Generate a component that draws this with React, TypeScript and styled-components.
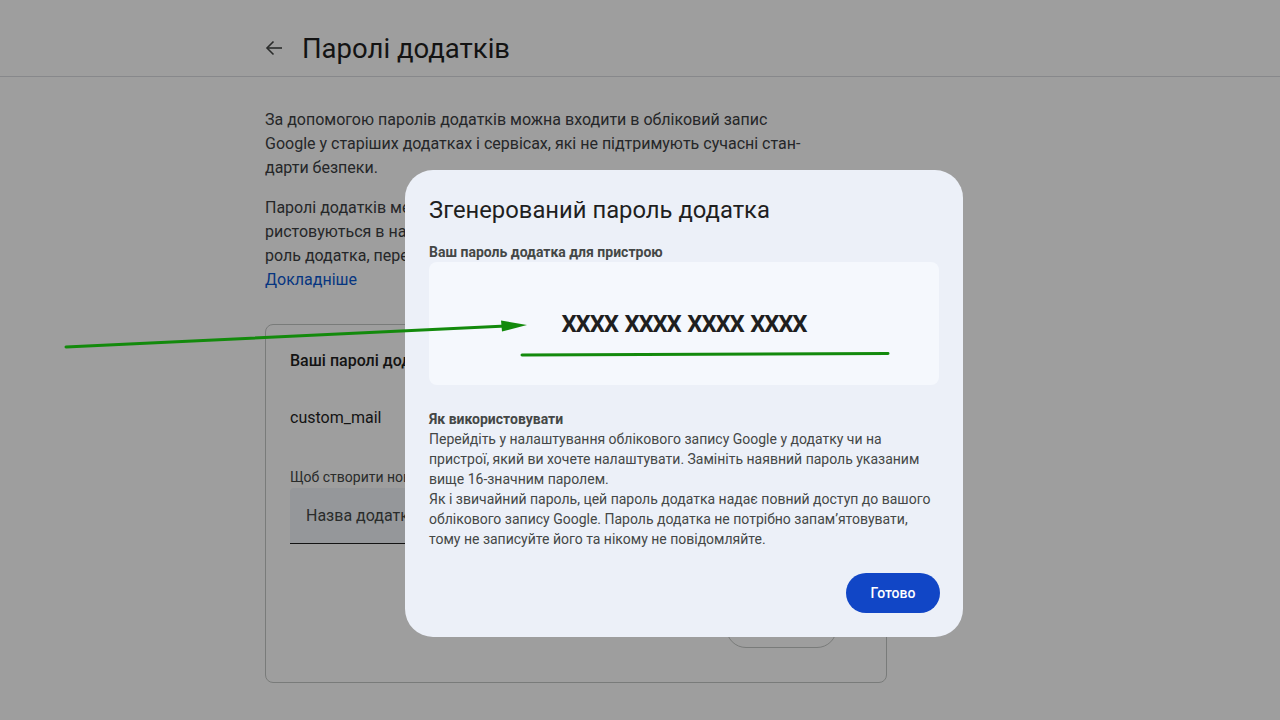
import React from "react";
import styled, { createGlobalStyle } from "styled-components";

const GlobalStyle = createGlobalStyle`
  html, body { margin: 0; padding: 0; background: #ffffff; }
  body { font-family: Roboto, "Noto Sans", Arial, sans-serif; color: #1f1f1f; overflow: hidden; }
  * { box-sizing: border-box; }
`;

const Page = styled.div`
  width: 1280px;
  height: 720px;
  background: #ffffff;
  position: relative;
  overflow: hidden;
`;

const Header = styled.header`
  height: 77px;
  border-bottom: 1px solid #dadce0;
  padding: 20px 0 0 262px;
  display: flex;
  align-items: flex-start;
  gap: 16px;
`;

const BackButton = styled.div`
  width: 24px;
  height: 56px;
  display: flex;
  align-items: center;
  justify-content: center;
  color: #444746;
`;

const Title = styled.h1`
  margin: 0;
  height: 56px;
  display: flex;
  align-items: center;
  font-family: Roboto, Arial, sans-serif;
  font-weight: 400;
  font-size: 27.5px;
  color: #1f1f1f;
`;

const Main = styled.main`
  width: 622px;
  margin-left: 265px;
  padding-top: 31px;
`;

const Para = styled.p`
  margin: 0 0 16px;
  font-size: 16px;
  line-height: 24px;
  color: #3c4043;
  white-space: nowrap;
`;

const Link = styled.a`
  color: #0b57d0;
  text-decoration: none;
`;

const Card = styled.section`
  margin-top: 32px;
  height: 359px;
  border: 1px solid #c4c7c5;
  border-radius: 8px;
  padding: 24px 24px 0;
  position: relative;
`;

const CardTitle = styled.div`
  font-size: 16px;
  line-height: 24px;
  font-weight: 500;
  color: #1f1f1f;
`;

const AppRow = styled.div`
  margin-top: 33px;
  font-size: 16px;
  line-height: 24px;
  color: #1f1f1f;
`;

const Hint = styled.div`
  margin-top: 37px;
  font-size: 14px;
  line-height: 20px;
  color: #444746;
`;

const Input = styled.div`
  margin-top: 1px;
  height: 56px;
  width: 572px;
  background: #f0f4f9;
  border-bottom: 1px solid #1f1f1f;
  border-radius: 4px 4px 0 0;
  padding: 0 16px;
  display: flex;
  align-items: center;
  font-size: 16px;
  color: #444746;
`;

const CreateButton = styled.div`
  position: absolute;
  left: 460px;
  top: 283px;
  width: 111px;
  height: 40px;
  border: 1px solid #c4c7c5;
  border-radius: 20px;
  display: flex;
  align-items: center;
  justify-content: center;
  font-size: 14px;
  font-weight: 500;
  color: #0b57d0;
`;

const Scrim = styled.div`
  position: absolute;
  inset: 0;
  background: rgba(0, 0, 0, 0.38);
`;

const Dialog = styled.div`
  position: absolute;
  left: 405px;
  top: 170px;
  width: 558px;
  background: #ecf0f8;
  border-radius: 28px;
  padding: 24px;
  display: flex;
  flex-direction: column;
  & > * { flex-shrink: 0; }
`;

const DialogTitle = styled.h2`
  margin: 0;
  font-family: Roboto, Arial, sans-serif;
  font-weight: 400;
  font-size: 23.8px;
  line-height: 32px;
  color: #1f1f1f;
`;

const Label = styled.div`
  margin-top: 16px;
  font-size: 14px;
  line-height: 20px;
  font-weight: 700;
  color: #444746;
`;

const PasswordBox = styled.div`
  height: 123px;
  background: #f5f8fd;
  border-radius: 8px;
  display: flex;
  align-items: center;
  justify-content: center;
`;

const Password = styled.div`
  font-family: Roboto, Arial, sans-serif;
  font-weight: 700;
  font-size: 24px;
  letter-spacing: -1.2px;
  word-spacing: 2px;
  color: #1f1f1f;
`;

const HowTitle = styled.div`
  margin-top: 24px;
  font-size: 14px;
  line-height: 20px;
  font-weight: 700;
  color: #444746;
`;

const HowText = styled.div`
  font-size: 14px;
  line-height: 20px;
  color: #444746;
  white-space: nowrap;
`;

const Actions = styled.div`
  margin-top: 24px;
  display: flex;
  justify-content: flex-end;
`;

const DoneButton = styled.button`
  width: 94px;
  height: 40px;
  border: none;
  border-radius: 20px;
  background: #1146c6;
  color: #ffffff;
  font-family: Roboto, Arial, sans-serif;
  font-size: 14px;
  font-weight: 500;
  margin-right: -1px;
`;

const Annotation = styled.svg`
  position: absolute;
  left: 0;
  top: 0;
  pointer-events: none;
`;

export default function App() {
  return (
    <Page>
      <GlobalStyle />
      <Header>
        <BackButton>
          <svg width="24" height="24" viewBox="0 0 24 24" fill="none" stroke="currentColor" strokeWidth="1.6">
            <path d="M20 12H5" />
            <path d="M11.5 5.5L5 12l6.5 6.5" />
          </svg>
        </BackButton>
        <Title>Паролі додатків</Title>
      </Header>
      <Main>
        <Para>
          За допомогою паролів додатків можна входити в обліковий запис
          <br />
          Google у старіших додатках і сервісах, які не підтримують сучасні стан-
          <br />
          дарти безпеки.
        </Para>
        <Para>
          Паролі додатків менш безпечні, ніж сучасні додатки й сервіси, що вико-
          <br />
          ристовуються в налаштуваннях. Перш ніж створювати па-
          <br />
          роль додатка, перевірте, чи потрібен він для входу.
          <br />
          <Link>Докладніше</Link>
        </Para>
        <Card>
          <CardTitle>Ваші паролі додатків</CardTitle>
          <AppRow>custom_mail</AppRow>
          <Hint>Щоб створити новий пароль додатка, введіть нижче його назву</Hint>
          <Input>Назва додатка</Input>
          <CreateButton>Створити</CreateButton>
        </Card>
      </Main>
      <Scrim />
      <Dialog>
        <DialogTitle>Згенерований пароль додатка</DialogTitle>
        <Label>Ваш пароль додатка для пристрою</Label>
        <PasswordBox>
          <Password>XXXX XXXX XXXX XXXX</Password>
        </PasswordBox>
        <HowTitle>Як використовувати</HowTitle>
        <HowText>
          Перейдіть у налаштування облікового запису Google у додатку чи на
          <br />
          пристрої, який ви хочете налаштувати. Замініть наявний пароль указаним
          <br />
          вище 16-значним паролем.
          <br />
          Як і звичайний пароль, цей пароль додатка надає повний доступ до вашого
          <br />
          облікового запису Google. Пароль додатка не потрібно запам’ятовувати,
          <br />
          тому не записуйте його та нікому не повідомляйте.
        </HowText>
        <Actions>
          <DoneButton>Готово</DoneButton>
        </Actions>
      </Dialog>
      <Annotation width="1280" height="720" viewBox="0 0 1280 720">
        <line x1="66" y1="347" x2="506" y2="326" stroke="#138a0c" strokeWidth="3" strokeLinecap="round" />
        <polygon points="501,320.5 527,325 502,331.5" fill="#138a0c" />
        <line x1="522" y1="355" x2="888" y2="353.5" stroke="#138a0c" strokeWidth="3" strokeLinecap="round" />
      </Annotation>
    </Page>
  );
}
